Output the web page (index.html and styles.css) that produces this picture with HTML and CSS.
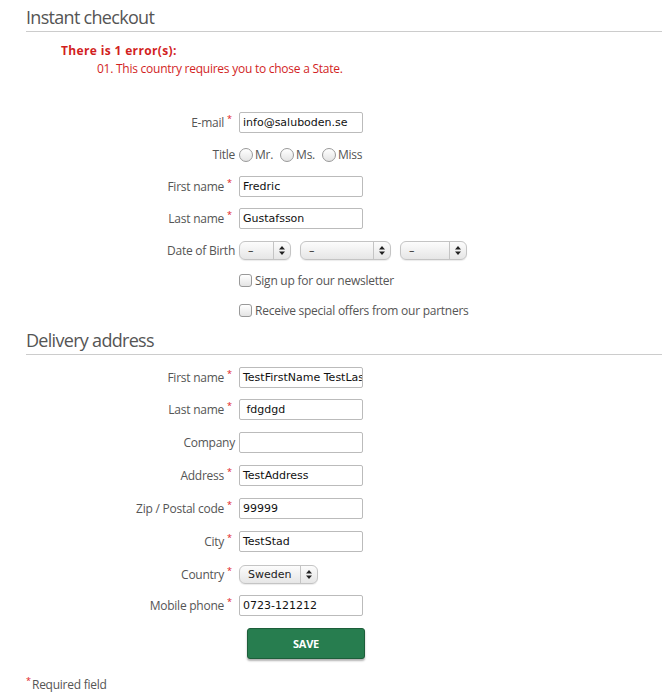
FILE: index.html
```html
<!DOCTYPE html>
<html>
<head>
<meta charset="utf-8">
<link rel="stylesheet" href="styles.css">
</head>
<body>
<div class="page">
  <h2 class="heading">Instant checkout</h2>
  <div class="errors">
    <p class="err-title">There is 1 error(s):</p>
    <p class="err-item">01. This country requires you to chose a State.</p>
  </div>

  <div class="form first">
    <div class="row"><label class="lbl">E-mail<span class="req">*</span></label><div class="input">info@saluboden.se</div></div>
    <div class="row"><label class="lbl plain">Title</label>
      <div class="radios">
        <span class="radio"></span><span class="opt">Mr.</span>
        <span class="radio"></span><span class="opt">Ms.</span>
        <span class="radio"></span><span class="opt">Miss</span>
      </div>
    </div>
    <div class="row"><label class="lbl">First name<span class="req">*</span></label><div class="input">Fredric</div></div>
    <div class="row"><label class="lbl">Last name<span class="req">*</span></label><div class="input">Gustafsson</div></div>
    <div class="row dob-row"><label class="lbl plain">Date of Birth</label>
      <div class="selects">
        <div class="select w1"><span class="val">–</span><span class="arrow"><svg width="6" height="9" viewBox="0 0 6 9"><path d="M0 3.5 L3 0 L6 3.5 Z M0 5.5 L3 9 L6 5.5 Z" fill="#222"/></svg></span></div>
        <div class="select w2"><span class="val">–</span><span class="arrow"><svg width="6" height="9" viewBox="0 0 6 9"><path d="M0 3.5 L3 0 L6 3.5 Z M0 5.5 L3 9 L6 5.5 Z" fill="#222"/></svg></span></div>
        <div class="select w3"><span class="val">–</span><span class="arrow"><svg width="6" height="9" viewBox="0 0 6 9"><path d="M0 3.5 L3 0 L6 3.5 Z M0 5.5 L3 9 L6 5.5 Z" fill="#222"/></svg></span></div>
      </div>
    </div>
    <div class="row check"><span class="lbl"></span><span class="box"></span><span class="opt">Sign up for our newsletter</span></div>
    <div class="row check last"><span class="lbl"></span><span class="box"></span><span class="opt">Receive special offers from our partners</span></div>
  </div>

  <h2 class="heading second">Delivery address</h2>
  <div class="form delivery">
    <div class="row first-row"><label class="lbl">First name<span class="req">*</span></label><div class="input">TestFirstName TestLastName</div></div>
    <div class="row"><label class="lbl">Last name<span class="req">*</span></label><div class="input">&nbsp;fdgdgd</div></div>
    <div class="row"><label class="lbl plain">Company</label><div class="input"></div></div>
    <div class="row"><label class="lbl">Address<span class="req">*</span></label><div class="input">TestAddress</div></div>
    <div class="row"><label class="lbl">Zip / Postal code<span class="req">*</span></label><div class="input">99999</div></div>
    <div class="row"><label class="lbl">City<span class="req">*</span></label><div class="input">TestStad</div></div>
    <div class="row country-row"><label class="lbl">Country<span class="req">*</span></label>
      <div class="select country"><span class="val">Sweden</span><span class="arrow"><svg width="6" height="9" viewBox="0 0 6 9"><path d="M0 3.5 L3 0 L6 3.5 Z M0 5.5 L3 9 L6 5.5 Z" fill="#222"/></svg></span></div>
    </div>
    <div class="row"><label class="lbl">Mobile phone<span class="req">*</span></label><div class="input">0723-121212</div></div>
    <div class="row btnrow"><span class="lbl"></span><button class="save">SAVE</button></div>
  </div>
  <p class="required"><span class="req">*</span>Required field</p>
</div>
</body>
</html>
```
FILE: styles.css
```css
html, body { margin: 0; padding: 0; background: #fff; }
body { font-family: "Open Sans", "DejaVu Sans", sans-serif; color: #555; }
.page { padding-left: 26px; padding-top: 5px; }
.heading {
  margin: 0;
  font-weight: normal;
  font-size: 18px;
  letter-spacing: -0.7px;
  line-height: 24px;
  color: #555;
  padding-bottom: 2px;
  border-bottom: 1px solid #ccc;
}
.heading.second { margin-top: 0; }
.errors { padding: 10px 0 0 35px; color: #d21f1f; }
.errors p { margin: 0; font-size: 12px; line-height: 18px; }
.err-title { font-weight: bold; letter-spacing: 0.35px; }
.err-item { padding-left: 36px; letter-spacing: -0.25px; }
.form { margin-top: 12px; }
.form.first { margin-top: 34px; }
.row { display: flex; align-items: center; height: 21px; margin-bottom: 11px; font-size: 12px; letter-spacing: -0.25px; }
.row.dob-row { margin-bottom: 10px; }
.delivery .row { margin-bottom: 12px; }
.delivery .row.first-row { margin-bottom: 11px; }
.delivery .row.country-row { margin-bottom: 10px; }
.lbl { width: 213px; flex: none; text-align: right; color: #555; white-space: nowrap; padding-right: 7px; box-sizing: border-box; }
.lbl.plain { padding-right: 4px; }
.req { color: #e02020; font-size: 9px; vertical-align: top; position: relative; top: -2px; margin-left: 3px; letter-spacing: 0; }
.input {
  width: 124px; height: 21px; box-sizing: border-box;
  border: 1px solid #bbb; border-radius: 2px;
  font-family: "DejaVu Sans", sans-serif; font-size: 11px; color: #111; letter-spacing: 0;
  padding: 0 3px; line-height: 19px; overflow: hidden; white-space: nowrap;
}
.radios { display: flex; align-items: center; }
.radio {
  width: 12px; height: 12px; border-radius: 50%; border: 1px solid #999;
  background: linear-gradient(#fff, #e4e4e4); margin-right: 2px;
}
.opt { color: #555; margin-right: 7px; }
.selects { display: flex; gap: 9px; }
.select {
  display: flex; align-items: stretch; height: 19px; box-sizing: border-box;
  border: 1px solid #c4c4c4; border-radius: 6px;
  background: linear-gradient(#fcfcfc, #e6e6e6);
  font-family: "DejaVu Sans", sans-serif; font-size: 11px; color: #222; letter-spacing: 0;
  box-shadow: 0 1px 1px rgba(0,0,0,0.08);
}
.select .val { flex: 1; padding-left: 8px; line-height: 17px; }
.select .arrow { width: 16px; border-left: 1px solid #c4c4c4; display: flex; align-items: center; justify-content: center; }
.select.w1 { width: 52px; }
.select.w2 { width: 91px; }
.select.w3 { width: 67px; }
.select.country { width: 79px; }
.row.check { height: 18px; margin-bottom: 12px; }
.row.check.last { margin-bottom: 9px; }
.box { width: 11px; height: 11px; border: 1px solid #999; border-radius: 3px; background: linear-gradient(#fff, #e4e4e4); margin-right: 3px; }
.btnrow { height: 31px; }
.save {
  margin-left: 8px; width: 118px; height: 31px;
  background: #277d4f; border: 1px solid #1d5e3a; border-radius: 3px;
  color: #fff; font-family: "Open Sans", sans-serif; font-weight: bold; font-size: 11px; letter-spacing: -0.3px;
  box-shadow: 0 2px 2px rgba(0,0,0,0.3);
}
.required { margin: 17px 0 0 0; font-size: 12px; color: #555; letter-spacing: -0.25px; }
.required .req { margin-left: 0; margin-right: 1px; }
```
